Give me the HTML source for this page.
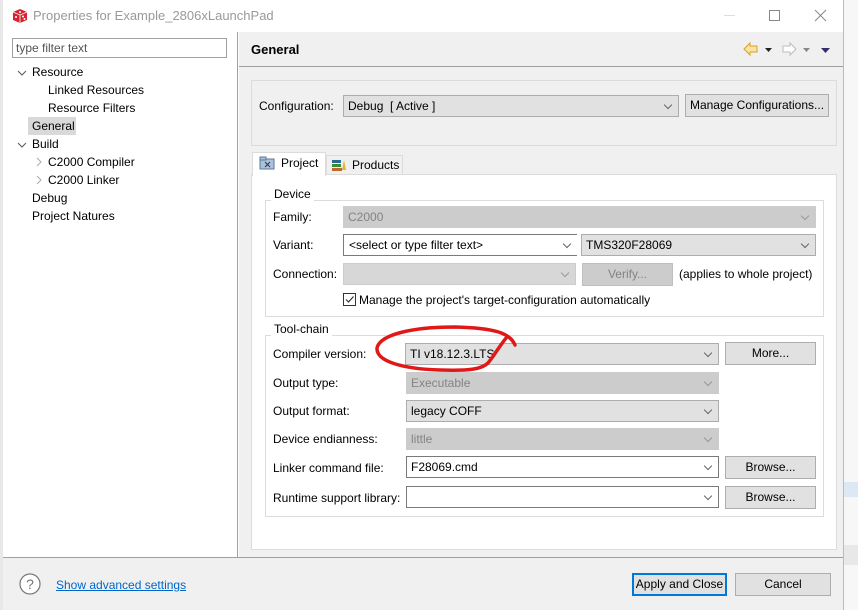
<!DOCTYPE html>
<html><head><meta charset="utf-8"><style>
*{box-sizing:border-box;margin:0;padding:0}
body{width:858px;height:610px;overflow:hidden;background:#fff;font-family:"Liberation Sans",sans-serif;font-size:12px;color:#000;position:relative}
.a{position:absolute;white-space:nowrap}
.lbl{position:absolute;line-height:14px}
.cb{position:absolute;background:#e1e1e1;border:1px solid #adadad;height:22px;line-height:20px;padding-left:4px}
.cb.w{background:#fff;border-color:#7a7a7a}
.cb.d{background:#cccccc;border-color:#cccccc;color:#838383}
.cb:after{content:"";position:absolute;right:7px;top:6px;width:5px;height:5px;border-right:1px solid #666;border-bottom:1px solid #666;transform:rotate(45deg)}
.cb.d:after{border-color:#999}
.btn{position:absolute;background:#e1e1e1;border:1px solid #adadad;height:23px;line-height:21px;text-align:center}
.grp{position:absolute;border:1px solid #dcdcdc}
.gt{position:absolute;background:#fff;padding:0 3px;line-height:14px}
</style></head><body>
<div class="a" style="left:0;top:0;width:3px;height:610px;background:#e8e8e8"></div>
<div class="a" style="left:843px;top:0;width:15px;height:610px;background:#f7f7f7;border-left:1px solid #bbb"></div>
<div class="a" style="left:844px;top:482px;width:14px;height:15px;background:#dde8f5"></div>
<div class="a" style="left:844px;top:545px;width:14px;height:20px;background:#e8e8e8"></div>
<div class="a" style="left:3px;top:0;width:840px;height:32px;background:#fff"></div>
<svg class="a" style="left:12px;top:8px" width="16" height="16" viewBox="0 0 16 16"><path d="M8 1 L15 4 L15 12 L8 15 L1 12 L1 4Z" fill="#d9232e"/><path d="M1 4 L8 7 L15 4 M8 7 V15" stroke="#fff" stroke-width=".8" fill="none"/><circle cx="8" cy="4" r="1" fill="#fff"/><circle cx="4" cy="9" r="1" fill="#fff"/><circle cx="11" cy="8.5" r="1" fill="#fff"/><circle cx="12.5" cy="11" r="1" fill="#fff"/></svg>
<div class="a" style="left:33px;top:8px;font-size:13px;color:#999">Properties for Example_2806xLaunchPad</div>
<div class="a" style="left:724px;top:15px;width:11px;height:1px;background:#ddd"></div>
<div class="a" style="left:769px;top:10px;width:11px;height:11px;border:1px solid #888"></div>
<svg class="a" style="left:814px;top:9px" width="13" height="13"><path d="M1 1L12 12M12 1L1 12" stroke="#888" stroke-width="1"/></svg>
<div class="a" style="left:3px;top:32px;width:235px;height:525px;background:#fff;border-right:1px solid #a0a0a0"></div>
<div class="a" style="left:12px;top:38px;width:215px;height:20px;border:1px solid #a0a0a0;background:#fff;padding-left:3px;line-height:18px;color:#555">type filter text</div>
<svg class="a" style="left:17px;top:69px" width="10" height="8"><path d="M1 2L5 6L9 2" stroke="#555" fill="none"/></svg>
<div class="lbl" style="left:32px;top:65px">Resource</div>
<div class="lbl" style="left:48px;top:83px">Linked Resources</div>
<div class="lbl" style="left:48px;top:101px">Resource Filters</div>
<div class="a" style="left:28px;top:117px;width:48px;height:18px;background:#d9d9d9"></div>
<div class="lbl" style="left:32px;top:119px">General</div>
<svg class="a" style="left:17px;top:141px" width="10" height="8"><path d="M1 2L5 6L9 2" stroke="#555" fill="none"/></svg>
<div class="lbl" style="left:32px;top:137px">Build</div>
<svg class="a" style="left:35px;top:157px" width="8" height="10"><path d="M2 1L6 5L2 9" stroke="#aaa" fill="none"/></svg>
<div class="lbl" style="left:48px;top:155px">C2000 Compiler</div>
<svg class="a" style="left:35px;top:175px" width="8" height="10"><path d="M2 1L6 5L2 9" stroke="#aaa" fill="none"/></svg>
<div class="lbl" style="left:48px;top:173px">C2000 Linker</div>
<div class="lbl" style="left:32px;top:191px">Debug</div>
<div class="lbl" style="left:32px;top:209px">Project Natures</div>
<div class="a" style="left:239px;top:32px;width:604px;height:525px;background:#f0f0f0"></div>
<div class="a" style="left:239px;top:66px;width:604px;height:1px;background:#a0a0a0"></div>
<div class="a" style="left:251px;top:42px;font-size:13px;font-weight:bold">General</div>
<svg class="a" style="left:742px;top:41px" width="90" height="16"><path d="M2 8L8 2V5H15V11H8V14Z" fill="#fbe3a0" stroke="#d9a22a"/><path d="M23 7h7l-3.5 4z" fill="#222"/><path d="M54 8L48 2V5H41V11H48V14Z" fill="#fff" stroke="#bbb"/><path d="M61 7h7l-3.5 4z" fill="#888"/><path d="M79 7h9l-4.5 5z" fill="#3b2a6b"/></svg>
<div class="grp" style="left:251px;top:80px;width:586px;height:66px"></div>
<div class="lbl" style="left:259px;top:99px">Configuration:</div>
<div class="cb" style="left:343px;top:95px;width:336px">Debug &nbsp;[ Active ]</div>
<div class="btn" style="left:685px;top:94px;width:144px">Manage Configurations...</div>
<div class="a" style="left:251px;top:174px;width:586px;height:376px;background:#fff;border:1px solid #dcdcdc"></div>
<div class="a" style="left:326px;top:155px;width:77px;height:20px;background:#f0f0f0;border:1px solid #dcdcdc"></div>
<div class="a" style="left:252px;top:152px;width:74px;height:24px;background:#fff;border:1px solid #dcdcdc;border-bottom:none"></div>
<svg class="a" style="left:259px;top:156px" width="16" height="14"><rect x="1" y="3" width="14" height="10" fill="#a9c3dc" stroke="#5b7a99"/><rect x="1" y="1" width="6" height="3" fill="#a9c3dc" stroke="#5b7a99"/><path d="M6 6L11 11M11 6L6 11" stroke="#333"/></svg>
<div class="lbl" style="left:281px;top:156px">Project</div>
<svg class="a" style="left:331px;top:158px" width="16" height="14"><rect x="1" y="2" width="9" height="3" fill="#2a6b8a"/><rect x="1" y="6" width="9" height="3" fill="#3a8a3a"/><rect x="1" y="10" width="10" height="3" fill="#c06a2a"/><path d="M11 12L13 2L15 12Z" fill="#e5b23a"/></svg>
<div class="lbl" style="left:352px;top:158px">Products</div>
<div class="grp" style="left:265px;top:200px;width:559px;height:117px"></div>
<div class="gt" style="left:271px;top:187px">Device</div>
<div class="lbl" style="left:273px;top:210px">Family:</div>
<div class="cb d" style="left:343px;top:206px;width:473px">C2000</div>
<div class="lbl" style="left:273px;top:238px">Variant:</div>
<div class="cb w" style="left:343px;top:234px;width:234px;border-right:none;padding-left:5px">&lt;select or type filter text&gt;</div>
<div class="cb" style="left:581px;top:234px;width:235px">TMS320F28069</div>
<div class="lbl" style="left:273px;top:267px">Connection:</div>
<div class="cb d" style="left:343px;top:263px;width:233px;background:#d7d7d7"></div>
<div class="btn" style="left:582px;top:263px;width:91px;background:#cccccc;border-color:#bfbfbf;color:#838383">Verify...</div>
<div class="lbl" style="left:679px;top:267px">(applies to whole project)</div>
<div class="a" style="left:343px;top:293px;width:13px;height:13px;border:1px solid #333;background:#fff"></div>
<svg class="a" style="left:344px;top:294px" width="11" height="11"><path d="M2 5.5L4.5 8L9.5 2.5" stroke="#333" fill="none" stroke-width="1.2"/></svg>
<div class="lbl" style="left:359px;top:293px">Manage the project's target-configuration automatically</div>
<div class="grp" style="left:265px;top:335px;width:559px;height:182px"></div>
<div class="gt" style="left:271px;top:322px">Tool-chain</div>
<div class="lbl" style="left:273px;top:347px">Compiler version:</div>
<div class="cb" style="left:405px;top:343px;width:314px">TI v18.12.3.LTS</div>
<div class="btn" style="left:725px;top:342px;width:91px">More...</div>
<div class="lbl" style="left:273px;top:376px">Output type:</div>
<div class="cb d" style="left:406px;top:372px;width:313px">Executable</div>
<div class="lbl" style="left:273px;top:404px">Output format:</div>
<div class="cb" style="left:406px;top:400px;width:313px">legacy COFF</div>
<div class="lbl" style="left:273px;top:432px">Device endianness:</div>
<div class="cb d" style="left:406px;top:428px;width:313px">little</div>
<div class="lbl" style="left:273px;top:461px">Linker command file:</div>
<div class="cb w" style="left:406px;top:456px;width:313px">F28069.cmd</div>
<div class="btn" style="left:725px;top:456px;width:91px">Browse...</div>
<div class="lbl" style="left:273px;top:491px">Runtime support library:</div>
<div class="cb w" style="left:406px;top:486px;width:313px"></div>
<div class="btn" style="left:725px;top:486px;width:91px">Browse...</div>
<svg class="a" style="left:370px;top:318px" width="150" height="60"><path d="M145 27C140 15 125 10 85 9C40 9 10 17 7 30C6 44 35 51 70 52C100 53 112 51 118 45C124 38 130 27 137 19" stroke="#e01818" stroke-width="3.5" fill="none" stroke-linecap="round" stroke-linejoin="round"/></svg>
<div class="a" style="left:3px;top:557px;width:840px;height:53px;background:#f0f0f0;border-top:1px solid #a0a0a0"></div>
<svg class="a" style="left:19px;top:573px" width="22" height="22"><circle cx="11" cy="11" r="10" fill="#fff" stroke="#777" stroke-width="1.2"/><text x="11" y="16" text-anchor="middle" font-family="Liberation Sans" font-size="14" fill="#777">?</text></svg>
<div class="lbl" style="left:56px;top:578px;color:#0066cc;text-decoration:underline">Show advanced settings</div>
<div class="btn" style="left:632px;top:573px;width:95px;border:2px solid #0078d7;line-height:19px">Apply and Close</div>
<div class="btn" style="left:735px;top:573px;width:96px">Cancel</div>
</body></html>
